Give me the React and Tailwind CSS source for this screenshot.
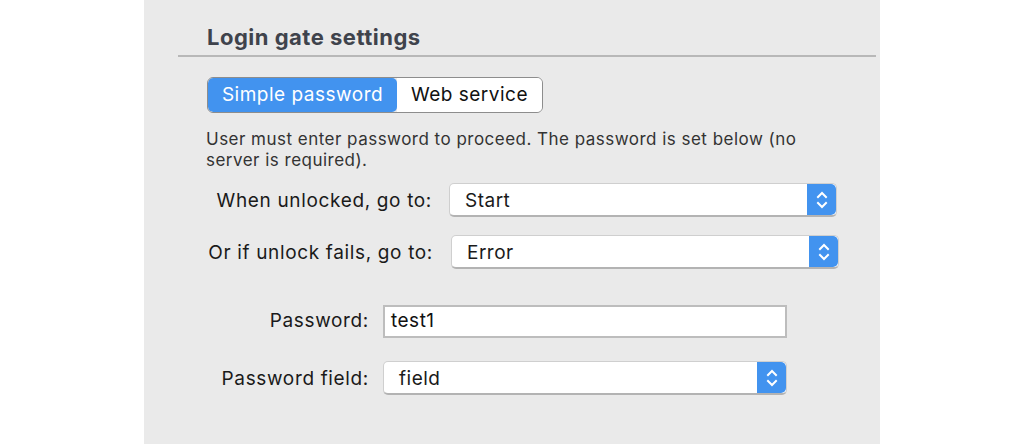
import React from "react";

const font = { fontFamily: "Inter, 'Liberation Sans', sans-serif" };

function Stepper() {
  return (
    <div className="w-[29px] h-full bg-[#4293ef] rounded-r-[5px] flex items-center justify-center">
      <svg width="14" height="22" viewBox="0 0 14 22" fill="none" stroke="white" strokeWidth="2" strokeLinecap="square">
        <path d="M3 8 L7 4 L11 8" />
        <path d="M3 14 L7 18 L11 14" />
      </svg>
    </div>
  );
}

function Select({ value, width }) {
  return (
    <div className={`flex h-[34px] ${width} rounded-[5px] bg-white border border-[#cfcfcf] border-b-[#b3b3b3] border-b-2 overflow-hidden`}>
      <div className="flex-1 flex items-center pl-[15px] pt-[3px] text-[19px] tracking-[0.5px] text-[#1a1a1a]">{value}</div>
      <Stepper />
    </div>
  );
}

export default function App() {
  return (
    <div className="w-[1024px] h-[444px] bg-white flex" style={font}>
      <div className="ml-[144px] w-[736px] h-full bg-[#eaeaea] flex flex-col">
        <h1 className="ml-[63px] mt-[23px] text-[22px] font-bold leading-[28px] tracking-[0.5px] text-[#3f434c]">
          Login gate settings
        </h1>
        <div className="ml-[34px] mr-[4px] mt-[4px] h-[2px] bg-[#b8b8b8]" />

        <div className="ml-[63px] mt-[20px] flex w-[336px] h-[36px] rounded-[6px] border border-[#8d8d8d] overflow-hidden text-[19px] tracking-[0.5px]">
          <div className="w-[189px] bg-[#4293ef] text-white flex items-center justify-center rounded-[5px] pt-[1px]">
            Simple password
          </div>
          <div className="flex-1 bg-white text-[#111] flex items-center justify-center pt-[1px]">
            Web service
          </div>
        </div>

        <p className="ml-[62px] mt-[16px] w-[610px] text-[17px] leading-[21px] tracking-[0.48px] text-[#333]">
          User must enter password to proceed. The password is set below (no server is required).
        </p>

        <div className="ml-[63px] mt-[12px] flex items-center">
          <div className="w-[225px] text-right text-[19px] tracking-[0.65px] text-[#1a1a1a] pt-[3px]">When unlocked, go to:</div>
          <div className="ml-[17px]">
            <Select value="Start" width="w-[388px]" />
          </div>
        </div>

        <div className="ml-[63px] mt-[18px] flex items-center">
          <div className="w-[226px] text-right text-[19px] tracking-[0.65px] text-[#1a1a1a] pt-[3px]">Or if unlock fails, go to:</div>
          <div className="ml-[18px]">
            <Select value="Error" width="w-[388px]" />
          </div>
        </div>

        <div className="ml-[63px] mt-[36px] flex items-center">
          <div className="w-[162px] text-right text-[19px] tracking-[0.65px] text-[#1a1a1a]">Password:</div>
          <div className="ml-[14px] w-[404px] h-[33px] bg-white border-2 border-[#bdbdbd] flex items-center pl-[6px] text-[19px] tracking-[0.5px] text-[#111]">
            test1
          </div>
        </div>

        <div className="ml-[63px] mt-[23px] flex items-center">
          <div className="w-[162px] text-right text-[19px] tracking-[0.65px] text-[#1a1a1a] pt-[3px]">Password field:</div>
          <div className="ml-[14px]">
            <Select value="field" width="w-[404px]" />
          </div>
        </div>
      </div>
    </div>
  );
}
